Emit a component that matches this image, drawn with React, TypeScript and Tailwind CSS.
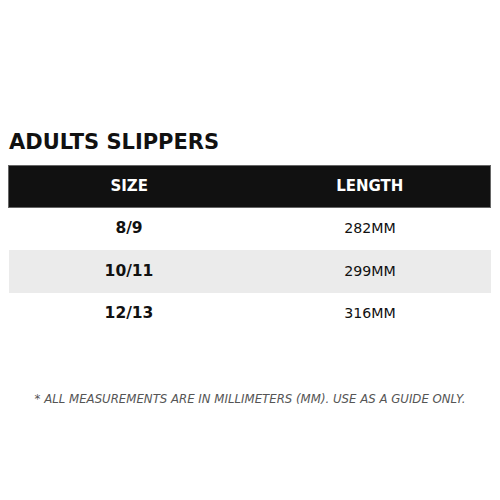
import React from 'react';

const rows = [
    { size: '8/9', length: '282MM' },
    { size: '10/11', length: '299MM' },
    { size: '12/13', length: '316MM' },
];

const App: React.FC = () => {
    return (
        <div className="w-[500px] h-[500px] bg-white font-['DejaVu_Sans',sans-serif] text-[#111]">
            <div className="pt-[129px] px-2">
                <h1 className="text-[21px] font-bold leading-[26px] pl-px">ADULTS SLIPPERS</h1>
                <table className="w-[483px] mt-[10px] border-collapse">
                    <thead>
                        <tr className="bg-[#111] text-white h-[42px]">
                            <th className="w-1/2 text-[15px] font-bold border-y border-l border-[#666]">SIZE</th>
                            <th className="w-1/2 text-[15px] font-bold border-y border-r border-[#666]">LENGTH</th>
                        </tr>
                    </thead>
                    <tbody>
                        {rows.map((row, i) => (
                            <tr key={row.size} className={`h-[42.5px] ${i === 1 ? 'bg-[#ebebeb]' : 'bg-white'}`}>
                                <td className="text-center text-[15.5px] font-bold">{row.size}</td>
                                <td className="text-center text-[14.2px]">{row.length}</td>
                            </tr>
                        ))}
                    </tbody>
                </table>
            </div>
            <p className="mt-[56px] text-center italic text-[11.75px] text-[#555]">
                * ALL MEASUREMENTS ARE IN MILLIMETERS (MM). USE AS A GUIDE ONLY.
            </p>
        </div>
    );
};

export default App;
